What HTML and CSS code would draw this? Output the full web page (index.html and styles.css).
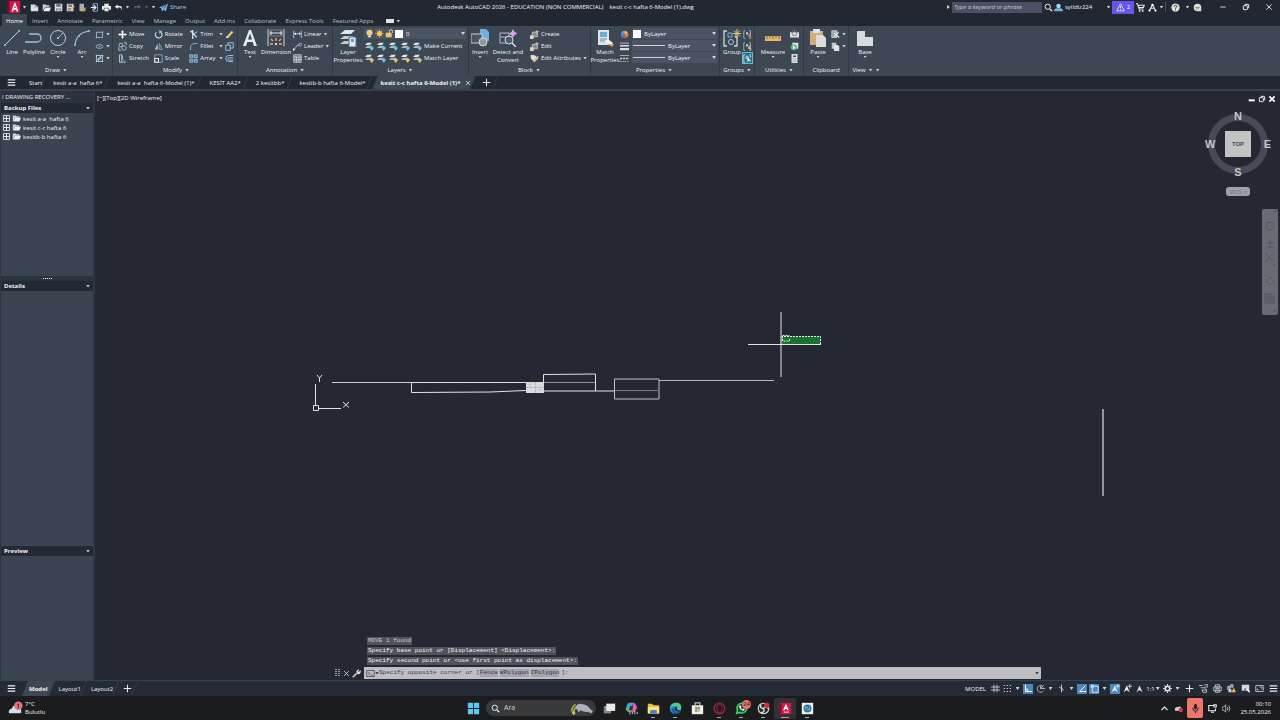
FILE: index.html
```html
<!DOCTYPE html>
<html lang="en">
<head>
<meta charset="utf-8">
<title>Autodesk AutoCAD 2026</title>
<link rel="stylesheet" href="styles.css">
</head>
<body>
<svg class="sprite" aria-hidden="true">
  <defs>
    <symbol id="new" viewBox="0 0 12 12"><path d="M1 2h6l4 3v6H1z" fill="#dcdde0"/><path d="M7 2v3h4" fill="none" stroke="#666"/></symbol>
    <symbol id="open" viewBox="0 0 12 12"><path d="M1 11V2h4l1 1h4v2H4L1 11z" fill="#d4d6da"/><path d="M4 6h8l-2 5H2z" fill="#eee"/></symbol>
    <symbol id="save" viewBox="0 0 12 12"><path d="M1 1h10v10H1z" fill="#dcdde0"/><path d="M3 1h6v4H3zM3 7h6v4H3z" fill="#6b7280"/><path d="M4 8h4M4 10h4" stroke="#eee"/></symbol>
    <symbol id="saveas" viewBox="0 0 12 12"><path d="M1 1h9v10H1z" fill="#d0d2d6"/><path d="M3 2h5v3H3zM3 7h4v3H3z" fill="#6b7280"/><path d="M5 10l6-6" stroke="#e8b85a" stroke-width="2"/></symbol>
    <symbol id="webopen" viewBox="0 0 12 12"><path d="M2 1h6v10H2z" fill="#9db4c6"/><path d="M5 6h5v5H5z" fill="#d9a04e"/></symbol>
    <symbol id="websave" viewBox="0 0 12 12"><path d="M4 1h6v10H4z" fill="none" stroke="#9fc8e8"/><path d="M1 6h6M5 3l3 3-3 3" stroke="#e5eef5" fill="none" stroke-width="1.5"/></symbol>
    <symbol id="plot" viewBox="0 0 12 12"><path d="M3 1h6v3H3zM0 4h12v5H0z" fill="#eceded"/><path d="M3 7h6v4H3z" fill="#fff" stroke="#555"/></symbol>
    <symbol id="undo" viewBox="0 0 12 12"><path d="M5 2L1 5l4 3V6h3q2 0 2 4 2-6-2-6H5z" fill="#eee"/></symbol>
    <symbol id="redo" viewBox="0 0 12 12"><path d="M7 2l4 3-4 3V6H4q-2 0-2 4-2-6 2-6h3z" fill="#596170"/></symbol>
    <symbol id="share" viewBox="0 0 12 12"><path d="M0 6l12-5-3 10-3-2-2 2-1-4z" fill="#80bfed"/><path d="M3 7l7-5-4 7" stroke="#284b68" fill="none"/></symbol>
    <symbol id="mag" viewBox="0 0 12 12"><circle cx="5" cy="5" r="3.5" fill="none" stroke="#eee" stroke-width="1.3"/><path d="M8 8l3 3" stroke="#eee" stroke-width="1.6"/></symbol>
    <symbol id="user" viewBox="0 0 12 12"><circle cx="6" cy="4" r="3" fill="#a7d8ee"/><path d="M0 11q0-4 4-4h4q4 0 4 4z" fill="#69b5dc"/></symbol>
    <symbol id="warn" viewBox="0 0 12 12"><path d="M6 1l5 9.500H1z" fill="none" stroke="#fff"/><path d="M6 4v3M6 8v1.300" stroke="#fff"/></symbol>
    <symbol id="cart" viewBox="0 0 12 12"><path d="M0 1h2l2 7h6M3 3h8l-1 3H4" fill="none" stroke="#eee" stroke-width="1.400"/><circle cx="5" cy="10.500" r="1.200" fill="#eee"/><circle cx="9" cy="10.500" r="1.200" fill="#eee"/></symbol>
    <symbol id="appstore" viewBox="0 0 12 12"><path d="M6 2l-4 8M6 2l4 8M4 7h4" stroke="#e6e6e8" stroke-width="1.500"/><circle cx="6" cy="2.500" r="1.500" fill="#fff"/><circle cx="2" cy="10" r="1.500" fill="#fff"/><circle cx="10" cy="10" r="1.500" fill="#fff"/></symbol>
    <symbol id="help" viewBox="0 0 12 12"><circle cx="6" cy="6" r="5.500" fill="#deded9"/><path d="M4 5q0-2 2-2t2 1.500q0 1-2 2v1M6 8.500V10" fill="none" stroke="#38404c" stroke-width="1.300"/></symbol>
    <symbol id="chat" viewBox="0 0 12 12"><path d="M6 1a5 5 0 1 0 0 10h5V6a5 5 0 0 0-5-5z" fill="#deded9"/><path d="M3 6h6M4 8h4" stroke="#777"/></symbol>
    <symbol id="min" viewBox="0 0 12 12"><path d="M2 6h8" stroke="#eee" stroke-width="1.300"/></symbol>
    <symbol id="minbold" viewBox="0 0 12 12"><path d="M1 8h9" stroke="#fff" stroke-width="3"/></symbol>
    <symbol id="restore" viewBox="0 0 12 12"><rect x="2" y="4" width="6" height="6" rx="1" fill="none" stroke="#eee" stroke-width="1.500"/><path d="M4 2h5q1 0 1 1v5" fill="none" stroke="#eee" stroke-width="1.500"/></symbol>
    <symbol id="close" viewBox="0 0 12 12"><path d="M2 2l8 8M10 2l-8 8" stroke="#e4e6ea" stroke-width="1.400"/></symbol>
    <symbol id="closebold" viewBox="0 0 12 12"><path d="M2 2l8 8M10 2l-8 8" stroke="#fff" stroke-width="2.500"/></symbol>
    <symbol id="menu" viewBox="0 0 12 12"><path d="M1 2.500h10M1 6h10M1 9.500h10" stroke="#f0f0f2" stroke-width="1.500"/></symbol>
    <symbol id="plus" viewBox="0 0 12 12"><path d="M6 1v10M1 6h10" stroke="#e8eaee" stroke-width="1.400"/></symbol>

    <symbol id="line" viewBox="0 0 18 18"><path d="M2 16L16 2" stroke="#c9cfd6"/><path d="M1 15h2v2H1zM15 1h2v2h-2z" fill="#72b7dc"/></symbol>
    <symbol id="polyline" viewBox="0 0 18 18"><path d="M1 13h11a4 4 0 0 0 0-8L5 5" fill="none" stroke="#aebdca" stroke-width="1.300"/><path d="M0 12h2v2H0zM11 12h2v2h-2zM4 4h2v2H4z" fill="#6caed5"/></symbol>
    <symbol id="circle" viewBox="0 0 18 18"><circle cx="9" cy="9" r="7.500" fill="none" stroke="#c3cad2"/><path d="M9 9l5-5" stroke="#83b9da"/><path d="M8 8h2v2H8z" fill="#83c0e3"/></symbol>
    <symbol id="arc" viewBox="0 0 18 18"><path d="M2 16Q3 4 16 2" fill="none" stroke="#b7c2cd" stroke-width="1.200"/><path d="M1 15h2v2H1zM5 6h2v2H5zM15 1h2v2h-2z" fill="#72b7dc"/></symbol>
    <symbol id="rect" viewBox="0 0 12 12"><path d="M2 3h8v7H2z" fill="none" stroke="#c6ced6"/><path d="M1 9h2v2H1zM9 2h2v2H9z" fill="#7fc1e8"/></symbol>
    <symbol id="ellipse" viewBox="0 0 12 12"><ellipse cx="6" cy="6" rx="4.500" ry="2.500" fill="none" stroke="#bdcad6"/><circle cx="6" cy="6" r="1" fill="#7fc1e8"/></symbol>
    <symbol id="hatch" viewBox="0 0 12 12"><path d="M1 2h10M1 10h10M2 1v10M10 1v10" fill="none" stroke="#d7dde3"/><path d="M3 8l5-5M4 9l5-5" stroke="#79b8e0" stroke-width="1.500"/></symbol>
    <symbol id="move" viewBox="0 0 12 12"><path d="M6 0l2 3H7v2h2V4l3 2-3 2V7H7v2h1l-2 3-2-3h1V7H3v1L0 6l3-2v1h2V3H4z" fill="#f0f2f4"/></symbol>
    <symbol id="copy" viewBox="0 0 12 12"><circle cx="4" cy="4" r="2.500" fill="none" stroke="#d5dde5"/><circle cx="8" cy="8" r="3" fill="none" stroke="#8ebee0" stroke-width="1.300"/><path d="M8 1h3v3M1 7v4h3" fill="none" stroke="#dbe1e7"/></symbol>
    <symbol id="stretch" viewBox="0 0 12 12"><path d="M2 1h3v10H2z" fill="none" stroke="#dee3e8"/><path d="M6 2v5l4 4H5" fill="none" stroke="#82bae0" stroke-width="1.300"/></symbol>
    <symbol id="rotate" viewBox="0 0 12 12"><path d="M8 2a4.500 4.500 0 1 1-5 1" fill="none" stroke="#e2e7ec" stroke-width="1.400"/><path d="M7 0l4 2-4 3z" fill="#8dc4ea"/></symbol>
    <symbol id="mirror" viewBox="0 0 12 12"><path d="M5 2v8H1z" fill="#b9c2cc"/><path d="M7 2v8h4z" fill="none" stroke="#7fbfe8"/></symbol>
    <symbol id="scale" viewBox="0 0 12 12"><path d="M1 1h10v10H1z" fill="none" stroke="#9eb3c6"/><path d="M1 6h5v5H1z" fill="none" stroke="#e5e9ee" stroke-width="1.400"/></symbol>
    <symbol id="trim" viewBox="0 0 12 12"><path d="M2 1l5 5 3 4M5 0v12" fill="none" stroke="#e8edf1" stroke-width="1.600"/><path d="M7 5l4-3" stroke="#7fc1e8" stroke-width="1.500"/></symbol>
    <symbol id="fillet" viewBox="0 0 12 12"><path d="M2 11V8q0-6 6-6h3" fill="none" stroke="#87aac5" stroke-width="1.300"/></symbol>
    <symbol id="array" viewBox="0 0 12 12"><path d="M1 1h4v4H1zM7 1h4v4H7zM1 7h4v4H1zM7 7h4v4H7z" fill="#4c7ca4" stroke="#a8cee9"/></symbol>
    <symbol id="erase" viewBox="0 0 12 12"><path d="M2 9l7-8 2 2-7 8z" fill="#f1cf78"/><path d="M1 11l1-3 2 2z" fill="#eee"/></symbol>
    <symbol id="explode" viewBox="0 0 12 12"><path d="M1 4h6v7H1zM4 4V1h7v7H7" fill="none" stroke="#9bcaec" stroke-width="1.200"/></symbol>
    <symbol id="offset" viewBox="0 0 12 12"><path d="M11 2H5a4 4 0 0 0 0 8h6M11 5H5.500a1 1 0 0 0 0 3H11" fill="none" stroke="#a3cdea" stroke-width="1.200"/></symbol>
    <symbol id="text" viewBox="0 0 18 18"><path d="M2 17L8 1h2l6 16h-3l-1.300-4H6.300L5 17zM7 10.500h4L9 4.500z" fill="#e9ecef"/></symbol>
    <symbol id="dim" viewBox="0 0 18 18"><path d="M1 0v17M17 0v17" stroke="#cfd5db"/><path d="M2 4h14M4 2v4M14 2v4" stroke="#e6eaed"/><path d="M2 1h14v6H2z" fill="none" stroke="#77818c"/><path d="M9 9v3M4 10l2 2M14 10l-2 2M3 15h3M12 15h3" stroke="#eaa465" stroke-width="1.500"/><path d="M8 14h2v2H8z" fill="#f1d3a5"/></symbol>
    <symbol id="linear" viewBox="0 0 12 12"><path d="M1 1v10M11 1v10M1 5h10" stroke="#d8dee3"/><path d="M2 5l2-2v4zM10 5L8 3v4z" fill="#eee"/></symbol>
    <symbol id="leader" viewBox="0 0 12 12"><path d="M1 11l5-7h3" fill="none" stroke="#d8dee3"/><circle cx="9.500" cy="3.500" r="2" fill="none" stroke="#9bc9ea"/><path d="M0 12V8l3 2z" fill="#eee"/></symbol>
    <symbol id="table" viewBox="0 0 12 12"><path d="M1 1h10v10H1zM1 4h10M1 7.500h10M4.500 4v7M8 4v7" fill="#66717d" stroke="#dce0e4"/></symbol>
    <symbol id="layerprops" viewBox="0 0 18 18"><path d="M1 5l5-4h10l-4 4z" fill="#e4e7e8"/><path d="M1 10l4-3h10l-4 3zM1 15l4-3h5v3z" fill="#c4cbd0"/><path d="M10 8h7v10h-7z" fill="#dce9f3" stroke="#536b80"/><path d="M12 10h3v3h-3z" fill="#579fd2"/></symbol>
    <symbol id="bulb" viewBox="0 0 12 12"><circle cx="6" cy="5" r="4" fill="#f1cf7b"/><path d="M4 9h4v2H4z" fill="#e4e5e6"/></symbol>
    <symbol id="sun" viewBox="0 0 12 12"><path d="M6 0v12M0 6h12M2 2l8 8M10 2l-8 8" stroke="#d9a651"/><circle cx="6" cy="6" r="3.500" fill="#f2c35d"/></symbol>
    <symbol id="lock" viewBox="0 0 12 12"><path d="M6 6V3q0-2 2-2t2 2v2" fill="none" stroke="#eed28b" stroke-width="1.300"/><path d="M1 5h8v6H1z" fill="#edc66e"/></symbol>
    <symbol id="layer" viewBox="0 0 12 12"><path d="M0 4l3-3h6L7 4z" fill="#e0e4e6"/><path d="M0 8l3-3h6L7 8z" fill="#aeb7be"/><path d="M9 5l3 3-3 4-3-4z" fill="currentColor"/></symbol>
    <symbol id="insert" viewBox="0 0 18 18"><path d="M9 0h6l3 3v9H9z" fill="#70afe0"/><path d="M0 5h11v9H0z" fill="#4b5561" stroke="#c7ccd0"/><circle cx="12" cy="13" r="4" fill="#8d98a2" stroke="#d3d8db"/></symbol>
    <symbol id="detect" viewBox="0 0 18 18"><path d="M1 4h9v10H1zM1 8h9" fill="none" stroke="#b5bdc4"/><circle cx="10" cy="11" r="4" fill="#505b68" stroke="#dae0e5"/><path d="M13 14l4 4" stroke="#dae0e5" stroke-width="1.500"/><path d="M14 0l1.500 3 3 1.500-3 1.500L14 9l-1.500-3-3-1.500 3-1.500z" fill="#d7a5ef"/></symbol>
    <symbol id="create" viewBox="0 0 12 12"><path d="M3 3h7v6H3z" fill="#7d8994" stroke="#ccd2d7"/><path d="M0 7h5v5H0z" fill="#ddd6bd"/><path d="M9 0v5M7 2h5" stroke="#f3c467"/></symbol>
    <symbol id="editattr" viewBox="0 0 12 12"><path d="M1 1l6 1 4 4-5 5-5-5z" fill="#dfe1df"/><path d="M5 10l6-7" stroke="#e1b35e" stroke-width="2"/></symbol>
    <symbol id="match" viewBox="0 0 18 18"><path d="M2 1h11v15H2z" fill="#dce4e9"/><path d="M4 3h7v5H4z" fill="#68add5"/><path d="M4 10h7M4 12h5" stroke="#789"/><path d="M9 12l3-2 5 4-2 3z" fill="#eee"/><path d="M12 15l4 3 2-3z" fill="#dda653"/></symbol>
    <symbol id="wheel" viewBox="0 0 12 12"><path d="M6 6V1a5 5 0 0 1 4.500 3z" fill="#efd257"/><path d="M6 6l4.500-2A5 5 0 0 1 9 10z" fill="#e98b45"/><path d="M6 6l3 4a5 5 0 0 1-5 .500z" fill="#d84a78"/><path d="M6 6l-2 4.500A5 5 0 0 1 1 6z" fill="#8e63d9"/><path d="M6 6H1a5 5 0 0 1 2-4z" fill="#4ba0e3"/><path d="M6 6L3 2a5 5 0 0 1 3-1z" fill="#5bc77d"/></symbol>
    <symbol id="weights" viewBox="0 0 12 12"><path d="M0 1.500h12" stroke="#ddd"/><path d="M0 5h12" stroke="#ddd" stroke-width="2"/><path d="M0 9.500h12" stroke="#ddd" stroke-width="3"/></symbol>
    <symbol id="types" viewBox="0 0 12 12"><path d="M0 2h12" stroke="#ccc"/><path d="M0 6h12" stroke="#ccc" stroke-width="2" stroke-dasharray="3 1"/><path d="M0 10h12" stroke="#ccc" stroke-dasharray="2 1"/></symbol>
    <symbol id="group" viewBox="0 0 18 18"><path d="M4 2H1v15h3M12 8h2v9h-3" fill="none" stroke="#c8d8e5" stroke-width="1.300"/><path d="M5 4h4v4H5z" fill="none" stroke="#74b5e2"/><circle cx="8" cy="13" r="2.500" fill="none" stroke="#a5cde9"/><path d="M14 0v9M10 4.500h8M11 1.500l6 6M17 1.500l-6 6" stroke="#f0c66e"/></symbol>
    <symbol id="ungroup" viewBox="0 0 12 12"><path d="M3 1H1v10h2M8 1h2v10H8" fill="none" stroke="#9cc7e5"/><path d="M4 3h3v3H4z" fill="#b9cbd9"/><path d="M7 7l4 3M10 4l-3 5" stroke="currentColor" stroke-width="1.500"/></symbol>
    <symbol id="groupsel" viewBox="0 0 12 12"><path d="M3 1H1v10h2M8 1h2v4M4 3h3v3H4z" fill="none" stroke="#d7e9ef"/><path d="M6 4v7l2-2 3 1z" fill="#fff"/></symbol>
    <symbol id="measure" viewBox="0 0 18 18"><path d="M1 7h16v5H1z" fill="#e9b66a"/><path d="M3 7v3M6 7v2M9 7v3M12 7v2M15 7v3" stroke="#705d43"/></symbol>
    <symbol id="quick" viewBox="0 0 12 12"><path d="M0 3h12v7H0z" fill="#dce0e1"/><path d="M3 0v6M9 0v6M3 7h6" stroke="#5c6670"/><path d="M6 0v4" stroke="#e86767"/></symbol>
    <symbol id="selall" viewBox="0 0 12 12"><path d="M3 1h8v8H3z" fill="#d7e9da"/><circle cx="5" cy="7" r="4" fill="#58b979"/><path d="M4 4v6l2-2 2 1z" fill="#fff"/></symbol>
    <symbol id="calc" viewBox="0 0 12 12"><path d="M2 0h8v12H2z" fill="#d8dcdf"/><path d="M4 2h4v2H4zM4 6h1v1H4zM7 6h1v1H7zM4 9h1v1H4zM7 9h1v1H7z" fill="#4a5561"/></symbol>
    <symbol id="paste" viewBox="0 0 18 18"><path d="M1 2h13v14H1z" fill="#d2ad79"/><path d="M4 0h7v4H4z" fill="#dfe2e3"/><path d="M7 6h7l3 3v9H7z" fill="#ddd"/></symbol>
    <symbol id="cut" viewBox="0 0 12 12"><path d="M1 1h7v9H1z" fill="#99a2ab" stroke="#d9dee1"/><path d="M4 4l7 6M10 3l-6 6" stroke="#e7eaed" stroke-width="1.500"/></symbol>
    <symbol id="copyclip" viewBox="0 0 12 12"><path d="M1 1h6v8H1z" fill="#c3c8cc"/><path d="M4 4h5l2 2v6H4z" fill="#e2e3e3"/></symbol>
    <symbol id="base" viewBox="0 0 18 18"><path d="M1 2h8v6h8v9H1z" fill="#d9dade"/></symbol>

    <symbol id="folder" viewBox="0 0 12 12"><path d="M1 10V2h4l1 1h4v2H4L2 10z" fill="#ccd4da"/><path d="M4 5h8l-2 5H2z" fill="#edf0f1"/></symbol>
    <symbol id="expand" viewBox="0 0 7 7"><path d="M.500.500h6v6h-6z" fill="#3b4551" stroke="#cdd3d9"/><path d="M1 3.500h5M3.500 1v5" stroke="#e8ebee"/></symbol>
    <symbol id="wrench" viewBox="0 0 12 12"><path d="M1 11l5-5" stroke="#ddd" stroke-width="2"/><path d="M11 2L9 4 8 3l2-2q-3-1-4 2t2 4 4-5z" fill="#ddd"/></symbol>
    <symbol id="prompt" viewBox="0 0 12 12"><path d="M1 2h10v8H1z" fill="none" stroke="#363942"/><path d="M3 4l2 2-2 2M6 8h3" fill="none" stroke="#363942"/></symbol>

    <symbol id="grid" viewBox="0 0 12 12"><path d="M0 4h12M0 8h12M4 1v10M8 1v10" stroke="#e2e4e7"/></symbol>
    <symbol id="snap" viewBox="0 0 12 12"><path d="M1 2h11M1 6h11M1 10h11" stroke="#dee1e4" stroke-width="1.500" stroke-dasharray="1.500 2.500"/></symbol>
    <symbol id="ortho" viewBox="0 0 12 12"><path d="M2 1v9h9M2 7h3v3" fill="none" stroke="#fff" stroke-width="1.300"/></symbol>
    <symbol id="polar" viewBox="0 0 12 12"><path d="M10 9a4.500 4.500 0 1 1 0-5M6 6h6M6 6l4-4M6 3v3" fill="none" stroke="#d7dadd"/></symbol>
    <symbol id="iso" viewBox="0 0 12 12"><path d="M6 1v10M3 4l6 4" stroke="#ddd" stroke-width="1.200"/></symbol>
    <symbol id="track" viewBox="0 0 12 12"><path d="M2 10l8-8M2 10h9" stroke="#eff6fc" fill="none" stroke-width="1.300"/></symbol>
    <symbol id="osnap" viewBox="0 0 12 12"><path d="M3 3h8v8H3z" fill="none" stroke="#fff"/><path d="M1 1h4v4H1z" fill="#b9daf5"/></symbol>
    <symbol id="anno" viewBox="0 0 12 12"><path d="M1 11l4-9 4 9-4-3z" fill="#f1f4f7"/><path d="M9 0v6M6 3h6" stroke="#f1f4f7"/></symbol>
    <symbol id="annoscale" viewBox="0 0 12 12"><path d="M2 11l4-9 4 9-4-3z" fill="#dedfe2"/></symbol>
    <symbol id="gear" viewBox="0 0 12 12"><circle cx="6" cy="6" r="3" fill="none" stroke="#eee" stroke-width="2"/><path d="M6 0v2M6 10v2M0 6h2M10 6h2M2 2l1.500 1.500M8.500 8.500L10 10M10 2L8.500 3.500M3.500 8.500L2 10" stroke="#eee" stroke-width="1.400"/></symbol>
    <symbol id="monitor" viewBox="0 0 12 12"><path d="M0 2h5M2 5h5M7 1h5v3H7M4 8h6v3H5z" fill="none" stroke="#dcdfe2"/><path d="M7 5l3 3" stroke="#dcdfe2"/></symbol>
    <symbol id="isolate" viewBox="0 0 12 12"><path d="M3 1h6v3H3zM3 8h6v3H3z" fill="none" stroke="#ddd"/><path d="M1 4h10v5H1z" fill="none" stroke="#ddd"/><path d="M3 6h6" stroke="#ddd"/></symbol>
    <symbol id="perf" viewBox="0 0 12 12"><path d="M1 8V3h3v5M5 5V1h3v4" stroke="#dbe1e6" fill="#77828c"/><path d="M2 7h4v4H2z" fill="#d4d8da"/><path d="M9 5l3 6H6z" fill="#f0bd49"/></symbol>
    <symbol id="custom" viewBox="0 0 12 12"><path d="M1 1h10v8H1z" fill="#d8dadd"/><path d="M4 6h3v3H4z" fill="#6b727d"/><path d="M8 7l4 4" stroke="#fff" stroke-width="2"/></symbol>
    <symbol id="clean" viewBox="0 0 12 12"><path d="M1 2h10v8H1z" fill="none" stroke="#ddd"/><path d="M6 4h3v3M3 6v2h2" fill="none" stroke="#ddd"/></symbol>

    <symbol id="weather" viewBox="0 0 16 16"><path d="M1 13q-1-4 3-5 2-5 6-2 4 0 4 4 1 2-1 3z" fill="#d4dced"/><circle cx="11" cy="5" r="4.500" fill="#ed7184"/><path d="M10 4l1-1v5" fill="none" stroke="#421923"/></symbol>
    <symbol id="windows" viewBox="0 0 16 16"><path d="M1 1h6.500v6.500H1zM8.500 1H15v6.500H8.500zM1 8.500h6.500V15H1zM8.500 8.500H15V15H8.500z" fill="#5bc7f3"/></symbol>
    <symbol id="manatee" viewBox="0 0 28 16"><path d="M2 12Q2 5 7 3M5 13Q4 7 9 6" fill="none" stroke="#9fb04c" stroke-width="2"/><path d="M7 6q2-6 10-3 5 1 8 6l3 2-2 3-4-2q-5 1-9-2l-3 3-1-4q-3 0-2-3z" fill="#a9afbb"/><path d="M2 13l2-2 3 3-3 2z" fill="#e0c553"/></symbol>
    <symbol id="taskview" viewBox="0 0 16 16"><path d="M1 5h9v9H1z" fill="#84868a"/><path d="M4 2h11v9H4z" fill="#eaeaea"/></symbol>
    <symbol id="copilot" viewBox="0 0 16 16"><path d="M5 1h5l-3 9H1q1-8 4-9z" fill="#3aa8df"/><path d="M10 1q3 0 5 6l-3 5H6l3-7z" fill="#dc63b1"/><path d="M1 7h6l-1 5q-4 1-5-5z" fill="#69b953"/><path d="M6 5h4l-1 5H5z" fill="#28343d"/><path d="M6 15v-4M9 15v-3M12 15v-4M15 15v-3" stroke="#eee"/></symbol>
    <symbol id="explorer" viewBox="0 0 16 16"><path d="M1 2h5l2 2h7v10H1z" fill="#f2bb38"/><path d="M1 6h14v8H1z" fill="#ffe083"/><path d="M4 10h8v4H4z" fill="#2f86cf"/></symbol>
    <symbol id="edge" viewBox="0 0 16 16"><circle cx="8" cy="8" r="7" fill="#1b8ed1"/><path d="M1 8Q2 1 9 1t6 7q-1 3-5 2 2-5-2-5-5 0-7 3z" fill="#53c98a"/><path d="M6 8q0 5 7 5-5 4-8 0-3-4 2-7z" fill="#17549b"/><path d="M7 7q3-2 3 2 1 2 4 1l-1 2q-6 0-6-5z" fill="#1f292c"/></symbol>
    <symbol id="store" viewBox="0 0 16 16"><path d="M5 4V1h6v3" fill="none" stroke="#9fc6d9" stroke-width="1.500"/><path d="M1 4h14v11H1z" fill="#f0efeb"/><path d="M5 6h3v3H5z" fill="#e67753"/><path d="M8 6h3v3H8z" fill="#69a65a"/><path d="M5 9h3v3H5z" fill="#4f9dce"/><path d="M8 9h3v3H8z" fill="#e6b949"/></symbol>
    <symbol id="opera" viewBox="0 0 16 16"><circle cx="8" cy="8" r="6.500" fill="none" stroke="#a72343" stroke-width="1.600"/><ellipse cx="8" cy="8" rx="3" ry="5.500" fill="none" stroke="#7e2139" stroke-width="1.500"/></symbol>
    <symbol id="whatsapp" viewBox="0 0 16 16"><path d="M2 14l1-4a6 6 0 1 1 3 3z" fill="#1c462f" stroke="#38cf69" stroke-width="2"/><path d="M5 5q0 5 6 6l1-2-2-1-1 1-2-2 1-1-1-2z" fill="#eee"/></symbol>
    <symbol id="obs" viewBox="0 0 16 16"><circle cx="8" cy="8" r="6.500" fill="#26282b" stroke="#d6d7d8" stroke-width="1.400"/><path d="M8 8Q3 8 5 3M8 8q3-4 5 0M8 8q2 5-3 5" fill="none" stroke="#ddd" stroke-width="1.800"/><circle cx="12" cy="4" r="3.300" fill="#df283d"/></symbol>
    <symbol id="acad" viewBox="0 0 16 16"><path d="M1 1h14v14H1z" fill="#cf1848"/><path d="M2 2v12" stroke="#7e0d2d" stroke-width="2"/><path d="M5 10l3-7h1l3 7h-2l-.500-1.500h-2L7 10zM8 7h1l-.500-2z" fill="#fff"/><path d="M6 12.500h6" stroke="#f2b9c8" stroke-width="1.500"/></symbol>
    <symbol id="logo" viewBox="0 0 16 16"><path d="M1 1h14v14H1z" fill="#d4134a"/><path d="M2 1v14" stroke="#7e0d2d" stroke-width="2"/><path d="M5 13l3.500-10h1L13 13h-2l-.700-2H7.700L7 13zM8 9h2L9 6z" fill="#fff"/></symbol>
    <symbol id="settings" viewBox="0 0 16 16"><path d="M1 1h14v14H1z" fill="#edf2f5"/><circle cx="8" cy="8" r="4" fill="#71add2" stroke="#347daa" stroke-width="2"/><path d="M6 5h3v3H7v3h3" fill="none" stroke="#285a7f"/></symbol>
    <symbol id="up" viewBox="0 0 12 12"><path d="M2 8l4-4 4 4" fill="none" stroke="#eee" stroke-width="1.500"/></symbol>
    <symbol id="cloud" viewBox="0 0 12 12"><path d="M1 8q0-4 4-4 4-2 5 2v3H2z" fill="#cfd4dc"/><circle cx="9" cy="8" r="3" fill="#d7394e"/></symbol>
    <symbol id="mic" viewBox="0 0 12 12"><rect x="4.500" y="1" width="3" height="6" rx="1.500" fill="#26191b"/><path d="M3 5q0 4 3 4t3-4M6 9v2" fill="none" stroke="#26191b"/></symbol>
    <symbol id="net" viewBox="0 0 12 12"><path d="M8 2H1v7h9V6M4 11h4M8 1h3v3H8z" fill="none" stroke="#eee" stroke-width="1.400"/></symbol>
    <symbol id="vol" viewBox="0 0 12 12"><path d="M0 4h2l3-3v10L2 8H0z" fill="none" stroke="#ddd"/><path d="M7 4q2 2 0 4M9 2q3 4 0 8" fill="none" stroke="#ddd"/></symbol>
  </defs>
</svg>

<header class="titlebar">
  <div class="quick">
    <button class="applogo" aria-label="Application menu"><svg><use href="#logo"/></svg></button>
    <button class="caret" aria-label="More"></button>
    <button class="q" aria-label="New"><svg><use href="#new"/></svg></button>
    <button class="q" aria-label="Open"><svg><use href="#open"/></svg></button>
    <button class="q" aria-label="Save"><svg><use href="#save"/></svg></button>
    <button class="q" aria-label="Save as"><svg><use href="#saveas"/></svg></button>
    <button class="q" aria-label="Open from web"><svg><use href="#webopen"/></svg></button>
    <button class="q" aria-label="Save to web"><svg><use href="#websave"/></svg></button>
    <button class="q" aria-label="Plot"><svg><use href="#plot"/></svg></button>
    <button class="q" aria-label="Undo"><svg><use href="#undo"/></svg></button>
    <button class="caret" aria-label="Undo list"></button>
    <button class="q" aria-label="Redo"><svg><use href="#redo"/></svg></button>
    <button class="caret dim" aria-label="Redo list"></button>
    <button class="caret" aria-label="Customize"></button>
    <button class="sharebtn"><svg><use href="#share"/></svg>Share</button>
  </div>
  <h1 class="title"><span>Autodesk AutoCAD 2026 - EDUCATION (NON COMMERCIAL)</span><span>kesit c-c hafta 6-Model (1).dwg</span></h1>
  <div class="account">
    <button class="caret side" aria-label="Collapse search"></button>
    <input class="search" type="text" placeholder="Type a keyword or phrase" aria-label="Search help">
    <button class="q" aria-label="Search"><svg><use href="#mag"/></svg></button>
    <button class="usr"><svg><use href="#user"/></svg>syildiz224</button>
    <button class="caret" aria-label="Account menu"></button>
    <button class="alert"><svg><use href="#warn"/></svg>2</button>
    <button class="q" aria-label="Cart"><svg><use href="#cart"/></svg></button>
    <button class="q" aria-label="App store"><svg><use href="#appstore"/></svg></button>
    <button class="caret" aria-label="App menu"></button>
    <span class="rule"></span>
    <button class="q wide" aria-label="Help"><svg><use href="#help"/></svg></button>
    <button class="caret" aria-label="Help menu"></button>
    <button class="q" aria-label="Feedback"><svg><use href="#chat"/></svg></button>
    <button class="win first" aria-label="Minimize"><svg><use href="#min"/></svg></button>
    <button class="win" aria-label="Restore"><svg><use href="#restore"/></svg></button>
    <button class="win" aria-label="Close"><svg><use href="#close"/></svg></button>
  </div>
</header>

<nav class="menu">
  <button class="on">Home</button><button>Insert</button><button>Annotate</button><button>Parametric</button><button>View</button><button>Manage</button><button>Output</button><button>Add-ins</button><button>Collaborate</button><button>Express Tools</button><button>Featured Apps</button>
  <button class="ribbonmode" aria-label="Ribbon display"><span class="pill"></span><span class="tri"></span></button>
</nav>

<section class="ribbon">
  <div class="panel draw">
    <div class="tools">
      <button class="big w20"><svg><use href="#line"/></svg>Line</button>
      <button class="big w24"><svg><use href="#polyline"/></svg>Polyline</button>
      <button class="big w24"><svg><use href="#circle"/></svg>Circle<i class="tri"></i></button>
      <button class="big w24"><svg><use href="#arc"/></svg>Arc<i class="tri"></i></button>
      <div class="col">
        <button class="sm" aria-label="Rectangle"><svg><use href="#rect"/></svg><i class="tri"></i></button>
        <button class="sm" aria-label="Ellipse"><svg><use href="#ellipse"/></svg><i class="tri"></i></button>
        <button class="sm" aria-label="Hatch"><svg><use href="#hatch"/></svg><i class="tri"></i></button>
      </div>
    </div>
    <button class="ptitle">Draw<i class="tri"></i></button>
  </div>
  <div class="panel modify">
    <div class="tools">
      <div class="col w36">
        <button class="sm"><svg><use href="#move"/></svg>Move</button>
        <button class="sm"><svg><use href="#copy"/></svg>Copy</button>
        <button class="sm"><svg><use href="#stretch"/></svg>Stretch</button>
      </div>
      <div class="col w36">
        <button class="sm"><svg><use href="#rotate"/></svg>Rotate</button>
        <button class="sm"><svg><use href="#mirror"/></svg>Mirror</button>
        <button class="sm"><svg><use href="#scale"/></svg>Scale</button>
      </div>
      <div class="col w36">
        <button class="sm"><svg><use href="#trim"/></svg>Trim<i class="tri end"></i></button>
        <button class="sm"><svg><use href="#fillet"/></svg>Fillet<i class="tri end"></i></button>
        <button class="sm"><svg><use href="#array"/></svg>Array<i class="tri end"></i></button>
      </div>
      <div class="col">
        <button class="sm" aria-label="Erase"><svg><use href="#erase"/></svg></button>
        <button class="sm" aria-label="Explode"><svg><use href="#explode"/></svg></button>
        <button class="sm" aria-label="Offset"><svg><use href="#offset"/></svg></button>
      </div>
    </div>
    <button class="ptitle">Modify<i class="tri"></i></button>
  </div>
  <div class="panel annotation">
    <div class="tools">
      <button class="big w20"><svg><use href="#text"/></svg>Text<i class="tri"></i></button>
      <button class="big w32"><svg><use href="#dim"/></svg>Dimension</button>
      <div class="col w36">
        <button class="sm"><svg><use href="#linear"/></svg>Linear<i class="tri end"></i></button>
        <button class="sm"><svg><use href="#leader"/></svg>Leader<i class="tri end"></i></button>
        <button class="sm"><svg><use href="#table"/></svg>Table</button>
      </div>
    </div>
    <button class="ptitle">Annotation<i class="tri"></i></button>
  </div>
  <div class="panel layers">
    <div class="tools">
      <button class="big w28"><svg><use href="#layerprops"/></svg>Layer Properties</button>
      <div class="col grow">
        <div class="drop"><svg><use href="#bulb"/></svg><svg><use href="#sun"/></svg><svg><use href="#lock"/></svg><span class="swatch"></span><select aria-label="Current layer"><option>0</option></select><i class="tri"></i></div>
        <div class="row">
          <button class="sm teal" aria-label="Layer off"><svg><use href="#layer"/></svg></button>
          <button class="sm blue" aria-label="Isolate layer"><svg><use href="#layer"/></svg></button>
          <button class="sm teal" aria-label="Freeze layer"><svg><use href="#layer"/></svg></button>
          <button class="sm blue" aria-label="Lock layer"><svg><use href="#layer"/></svg></button>
          <button class="sm named"><svg class="blue"><use href="#layer"/></svg>Make Current</button>
        </div>
        <div class="row">
          <button class="sm gold" aria-label="Layers on"><svg><use href="#layer"/></svg></button>
          <button class="sm blue" aria-label="Unisolate layer"><svg><use href="#layer"/></svg></button>
          <button class="sm gold" aria-label="Thaw layers"><svg><use href="#layer"/></svg></button>
          <button class="sm gold" aria-label="Unlock layer"><svg><use href="#layer"/></svg></button>
          <button class="sm named"><svg class="gold"><use href="#layer"/></svg>Match Layer</button>
        </div>
      </div>
    </div>
    <button class="ptitle">Layers<i class="tri"></i></button>
  </div>
  <div class="panel block">
    <div class="tools">
      <button class="big w20"><svg><use href="#insert"/></svg>Insert<i class="tri"></i></button>
      <button class="big w36"><svg><use href="#detect"/></svg>Detect and Convert</button>
      <div class="col">
        <button class="sm"><svg><use href="#create"/></svg>Create</button>
        <button class="sm"><svg><use href="#create"/></svg>Edit</button>
        <button class="sm"><svg><use href="#editattr"/></svg>Edit Attributes<i class="tri"></i></button>
      </div>
    </div>
    <button class="ptitle">Block<i class="tri"></i></button>
  </div>
  <div class="panel properties">
    <div class="tools">
      <button class="big w28"><svg><use href="#match"/></svg>Match Properties</button>
      <div class="col">
        <button class="sm" aria-label="Color"><svg><use href="#wheel"/></svg></button>
        <button class="sm" aria-label="Lineweight"><svg><use href="#weights"/></svg></button>
        <button class="sm" aria-label="Linetype"><svg><use href="#types"/></svg></button>
      </div>
      <div class="col grow">
        <div class="drop"><span class="swatch"></span><select aria-label="Object color"><option>ByLayer</option></select><i class="tri"></i></div>
        <div class="drop"><span class="stroke"></span><select aria-label="Object lineweight"><option>ByLayer</option></select><i class="tri"></i></div>
        <div class="drop"><span class="stroke"></span><select aria-label="Object linetype"><option>ByLayer</option></select><i class="tri"></i></div>
      </div>
    </div>
    <button class="ptitle">Properties<i class="tri"></i></button>
  </div>
  <div class="panel groups">
    <div class="tools">
      <button class="big w20"><svg><use href="#group"/></svg>Group</button>
      <div class="col">
        <button class="sm red" aria-label="Ungroup"><svg><use href="#ungroup"/></svg></button>
        <button class="sm gold" aria-label="Group edit"><svg><use href="#ungroup"/></svg></button>
        <button class="sm active" aria-label="Group selection"><svg><use href="#groupsel"/></svg></button>
      </div>
    </div>
    <button class="ptitle">Groups<i class="tri"></i></button>
  </div>
  <div class="panel utilities">
    <div class="tools">
      <button class="big w32"><svg><use href="#measure"/></svg>Measure<i class="tri"></i></button>
      <div class="col">
        <button class="sm" aria-label="Quick select"><svg><use href="#quick"/></svg></button>
        <button class="sm" aria-label="Select all"><svg><use href="#selall"/></svg></button>
        <button class="sm" aria-label="Calculator"><svg><use href="#calc"/></svg></button>
      </div>
    </div>
    <button class="ptitle">Utilities<i class="tri"></i></button>
  </div>
  <div class="panel clipboard">
    <div class="tools">
      <button class="big w24"><svg><use href="#paste"/></svg>Paste<i class="tri"></i></button>
      <div class="col">
        <button class="sm" aria-label="Cut"><svg><use href="#cut"/></svg><i class="tri"></i></button>
        <button class="sm" aria-label="Copy clip"><svg><use href="#copyclip"/></svg><i class="tri"></i></button>
      </div>
    </div>
    <button class="ptitle">Clipboard</button>
  </div>
  <div class="panel view">
    <div class="tools">
      <button class="big w28"><svg><use href="#base"/></svg>Base<i class="tri"></i></button>
    </div>
    <button class="ptitle">View<i class="tri"></i><i class="tri"></i></button>
  </div>
</section>

<nav class="doctabs">
  <button class="burger" aria-label="File tabs menu"><svg><use href="#menu"/></svg></button>
  <button class="tab start">Start</button>
  <button class="tab">kesit a-a&nbsp; hafta 6*</button>
  <button class="tab">kesit a-a&nbsp; hafta 6-Model (1)*</button>
  <button class="tab">KESİT AA2*</button>
  <button class="tab">2 kesitbb*</button>
  <button class="tab">kesitb-b hafta 6-Model*</button>
  <button class="tab current">kesit c-c hafta 6-Model (1)*<svg><use href="#close"/></svg></button>
  <button class="tab add" aria-label="New tab"><svg><use href="#plus"/></svg></button>
</nav>

<main class="work">
  <aside class="recovery">
    <h2 class="ptop">⁞ DRAWING RECOVERY ...</h2>
    <section class="pane backup">
      <button class="phead">Backup Files<i class="tri"></i></button>
      <ul class="tree">
        <li><svg class="expand"><use href="#expand"/></svg><svg><use href="#folder"/></svg>kesit a-a&nbsp; hafta 6</li>
        <li><svg class="expand"><use href="#expand"/></svg><svg><use href="#folder"/></svg>kesit c-c hafta 6</li>
        <li><svg class="expand"><use href="#expand"/></svg><svg><use href="#folder"/></svg>kesitb-b hafta 6</li>
      </ul>
    </section>
    <div class="grip"></div>
    <section class="pane details"><button class="phead">Details<i class="tri"></i></button></section>
    <section class="pane preview"><button class="phead">Preview<i class="tri"></i></button></section>
  </aside>

  <section class="canvas">
    <svg class="drawing" viewBox="95 91 1185 589" preserveAspectRatio="xMinYMin meet" role="img" aria-label="Model space">
      <g fill="none" stroke="#e2e3e7">
        <path d="M315.500 384v21M319 408.500h22M313.500 405.500h5v5h-5z"/>
        <path d="M317 375l2.500 3v4M322 375l-2.500 3M343 402l6 5.500M349 402l-6 5.500"/>
        <path d="M332 382.500h211" stroke="#c8cad0"/>
        <path d="M411.500 382.500H526M411.500 382v10.500L490 392l36-1.500h17"/>
        <path d="M543.500 391V374.500L595.500 374v17H543.500M595.500 391h19.500"/>
        <path d="M543 382.500h52" stroke="#8b8e98"/>
        <path d="M614.500 379h44.500v20h-44.500z" stroke="#c0c2c9"/>
        <path d="M615 390.500h44" stroke="#777a86"/>
        <path d="M659 380.500h115" stroke="#b6b8c0"/>
        <path d="M1103 409v87" stroke="#b8bac2" stroke-width="1.500"/>
      </g>
      <path d="M526 382h18v11h-18z" fill="#d9dad9"/>
      <path d="M526 387.500h18M535.500 382v11M530 384v2M540 389v2" stroke="#b2b4b8" stroke-dasharray="3 1"/>
      <path d="M781 336.500h39.500v8H781z" fill="#187333" stroke="#e8f2e9" stroke-dasharray="2 1"/>
      <path d="M782.500 335.500h7M782.500 336v5h7v-3" fill="none" stroke="#e6eee8" stroke-dasharray="2 1"/>
      <path d="M781 312v65" stroke="#a2a4ae" stroke-width="1.500"/>
      <path d="M748 344.500h73" stroke="#e2e6e5"/>
    </svg>
    <button class="viewlabel">[−][Top][2D Wireframe]</button>
    <div class="winbtns">
      <button aria-label="Minimize drawing"><svg><use href="#minbold"/></svg></button>
      <button aria-label="Restore drawing"><svg><use href="#restore"/></svg></button>
      <button aria-label="Close drawing"><svg><use href="#closebold"/></svg></button>
    </div>
    <div class="cube">
      <span class="n">N</span><span class="w">W</span><span class="ring"><button class="face">TOP</button></span><span class="e">E</span><span class="s">S</span>
    </div>
    <button class="wcs">WCS ▿</button>
    <div class="navbar" aria-hidden="true">
      <svg viewBox="0 0 16 106"><g fill="none" stroke="#555761"><circle cx="8" cy="17" r="4"/><path d="M8 31v8M5 34h7M5 38h7M3 44l9 9M12 44l-9 9M11 56h3M4 72l4-4 4 4-4 4zM3 85h9v9H3zM3 88h9M3 91h9M6 85v9M9 85v9M11 2h3v2M11 102h3v-2"/></g></svg>
    </div>
    <div class="command">
      <p class="old">MOVE 1 found</p>
      <p>Specify base point or [Displacement] &lt;Displacement&gt;:</p>
      <p>Specify second point or &lt;use first point as displacement&gt;:</p>
      <div class="cmdrow">
        <span class="handle"></span>
        <button aria-label="Close command line"><svg><use href="#close"/></svg></button>
        <button aria-label="Customize command line"><svg><use href="#wrench"/></svg></button>
        <div class="entry">
          <button class="recent" aria-label="Recent commands"><svg><use href="#prompt"/></svg><i class="tri"></i></button>
          <label for="cmd">Specify opposite corner or [</label>
          <button class="opt">Fence</button><button class="opt">WPolygon</button><button class="opt">CPolygon</button><span>]:</span>
          <input id="cmd" type="text">
          <i class="tri"></i>
        </div>
      </div>
    </div>
  </section>
</main>

<footer class="status">
  <button class="burger" aria-label="Layout menu"><svg><use href="#menu"/></svg></button>
  <button class="tab current">Model</button>
  <button class="tab">Layout1</button>
  <button class="tab">Layout2</button>
  <button class="tab add" aria-label="New layout"><svg><use href="#plus"/></svg></button>
  <div class="toggles">
    <button class="model">MODEL</button>
    <button class="t" aria-label="Grid"><svg><use href="#grid"/></svg></button>
    <button class="t" aria-label="Snap"><svg><use href="#snap"/></svg></button>
    <button class="caret" aria-label="Snap menu"></button>
    <button class="t on" aria-label="Ortho"><svg><use href="#ortho"/></svg></button>
    <button class="t" aria-label="Polar"><svg><use href="#polar"/></svg></button>
    <button class="caret" aria-label="Polar menu"></button>
    <button class="t" aria-label="Isodraft"><svg><use href="#iso"/></svg></button>
    <button class="caret" aria-label="Isodraft menu"></button>
    <button class="t on" aria-label="Tracking"><svg><use href="#track"/></svg></button>
    <button class="t on" aria-label="Object snap"><svg><use href="#osnap"/></svg></button>
    <button class="caret" aria-label="Snap modes"></button>
    <button class="t on" aria-label="Annotation visibility"><svg><use href="#anno"/></svg></button>
    <button class="t" aria-label="Auto scale"><svg><use href="#anno"/></svg></button>
    <button class="t" aria-label="Annotation scale"><svg><use href="#annoscale"/></svg></button>
    <button class="ratio">1:1<i class="tri"></i></button>
    <button class="t" aria-label="Workspace"><svg><use href="#gear"/></svg></button>
    <button class="caret" aria-label="Workspace menu"></button>
    <button class="t x" aria-label="Annotation monitor"><svg><use href="#plus"/></svg></button>
    <button class="t x" aria-label="Units"><svg><use href="#monitor"/></svg></button>
    <button class="t x" aria-label="Isolate"><svg><use href="#isolate"/></svg></button>
    <button class="t x" aria-label="Performance"><svg><use href="#perf"/></svg></button>
    <button class="t x" aria-label="Hardware"><svg><use href="#custom"/></svg></button>
    <button class="t x" aria-label="Clean screen"><svg><use href="#clean"/></svg></button>
    <button class="t x" aria-label="Customization"><svg><use href="#menu"/></svg></button>
  </div>
</footer>

<footer class="taskbar">
  <button class="weather"><svg><use href="#weather"/></svg><span>7°C<br>Bulutlu</span></button>
  <div class="apps">
    <button class="app" aria-label="Start"><svg><use href="#windows"/></svg></button>
    <label class="find"><svg><use href="#mag"/></svg><input type="text" placeholder="Ara" aria-label="Ara"><svg class="art"><use href="#manatee"/></svg></label>
    <button class="app" aria-label="Task view"><svg><use href="#taskview"/></svg></button>
    <button class="app" aria-label="Copilot"><svg><use href="#copilot"/></svg></button>
    <button class="app run" aria-label="File explorer"><svg><use href="#explorer"/></svg></button>
    <button class="app run" aria-label="Edge"><svg><use href="#edge"/></svg></button>
    <button class="app" aria-label="Store"><svg><use href="#store"/></svg></button>
    <button class="app run" aria-label="Opera"><svg><use href="#opera"/></svg></button>
    <button class="app run" aria-label="WhatsApp"><svg><use href="#whatsapp"/></svg><span class="badge">24</span></button>
    <button class="app run" aria-label="OBS"><svg><use href="#obs"/></svg></button>
    <button class="app run front" aria-label="AutoCAD"><svg><use href="#acad"/></svg></button>
    <button class="app run" aria-label="Settings"><svg><use href="#settings"/></svg></button>
  </div>
  <div class="tray">
    <button aria-label="Hidden icons"><svg><use href="#up"/></svg></button>
    <button aria-label="OneDrive"><svg><use href="#cloud"/></svg></button>
    <button class="mic" aria-label="Microphone"><svg><use href="#mic"/></svg></button>
    <button aria-label="Network"><svg><use href="#net"/></svg></button>
    <button aria-label="Volume"><svg><use href="#vol"/></svg></button>
    <time>00:10<br>25.05.2026</time>
  </div>
</footer>
</body>
</html>
```
FILE: styles.css
```css
* { box-sizing: border-box; }

body {
  margin: 0;
  height: 100vh;
  display: flex;
  flex-direction: column;
  overflow: hidden;
  background: #222832;
  color: #f2f4f6;
  font: 6px/8px "Open Sans", "Noto Sans", sans-serif;
}

button, input, select {
  margin: 0;
  padding: 0;
  border: 0;
  background: none;
  color: inherit;
  font: inherit;
  white-space: nowrap;
}

svg { display: block; flex: none; width: 9px; height: 9px; }
.sprite { position: absolute; width: 0; height: 0; }

.tri, .caret::after {
  content: "";
  flex: none;
  width: 4px;
  height: 3px;
  background: #cdd2d8;
  clip-path: polygon(0 0, 100% 0, 50% 100%);
}
.caret { display: flex; align-items: center; justify-content: center; width: 9px; }
.caret.dim::after { background: #5b6370; }
.caret.side::after { width: 3px; height: 4px; clip-path: polygon(0 0, 100% 50%, 0 100%); }

/* title bar */
.titlebar { flex: none; display: flex; align-items: center; height: 14px; }
.quick, .account { display: flex; align-items: center; height: 14px; }
.quick { padding-left: 7px; }
.applogo svg { width: 14px; height: 14px; }
.q { display: flex; justify-content: center; width: 12px; }
.quick .caret { width: 7px; }
.sharebtn { display: flex; align-items: center; gap: 2px; margin-left: 2px; color: #a6d3f2; }
.title {
  flex: 1;
  display: flex;
  justify-content: center;
  gap: 6px;
  margin: 0;
  font-size: 6px;
  font-weight: 400;
  line-height: 14px;
  white-space: nowrap;
}
.account .side { width: 7px; }
.search { width: 90px; height: 11px; padding: 0 2px; background: #4a5061; }
.search::placeholder { color: #c9ccd5; opacity: 1; font-style: italic; }
.usr { display: flex; align-items: center; gap: 2px; width: 51px; }
.alert {
  display: flex;
  align-items: center;
  justify-content: center;
  gap: 2px;
  width: 22px;
  height: 13px;
  background: #6557e8;
  color: #fff;
}
.rule { width: 1px; height: 10px; background: #4b5160; }
.q.wide { width: 18px; }
.account .caret { width: 7px; }
.win { display: flex; justify-content: center; width: 23px; }
.win.first { margin-left: 8px; }
.win svg { width: 8px; height: 8px; }

/* ribbon tabs */
.menu { flex: none; display: flex; gap: 1px; height: 12px; padding-left: 2px; color: #bcc1c9; line-height: 12px; }
.menu button { padding: 2px 4px 0; line-height: 8px; }
.menu .on { background: #3e4754; color: #fff; }
.menu .ribbonmode { display: flex; align-items: center; gap: 2px; padding-left: 8px; }
.pill { width: 8px; height: 4px; background: #dfe2e6; }

/* ribbon */
.ribbon { flex: none; display: flex; height: 50px; background: #3e4754; }
.panel { display: flex; flex-direction: column; padding: 2px 2px 0; border-right: 1px solid #313946; }
.draw { width: 113px; }
.modify { width: 125px; padding-left: 4px; }
.annotation { width: 95px; }
.layers { width: 136px; padding-left: 1px; }
.block { width: 122px; padding-left: 1px; }
.properties { width: 129px; padding-left: 0; }
.groups { width: 35px; }
.utilities { width: 49px; }
.clipboard { width: 45px; }
.view { width: 34px; border-right: 0; }
.tools { display: flex; height: 36px; }
.ptitle { display: flex; align-items: center; justify-content: center; gap: 3px; height: 12px; }
.big {
  flex: none;
  display: flex;
  flex-direction: column;
  align-items: center;
  line-height: 8px;
  white-space: normal;
}
.big svg { width: 18px; height: 18px; margin: 1px 0; }
.big .tri { width: 3px; height: 2px; }
.w20 { width: 20px; }
.w24 { width: 24px; }
.w28 { width: 28px; }
.w32 { width: 32px; }
.w36 { width: 36px; }
.col { display: flex; flex-direction: column; }
.grow { flex: 1; min-width: 0; padding-left: 2px; }
.sm { display: flex; align-items: center; gap: 2px; height: 12px; padding: 0 1px; }
.sm .end { margin-left: auto; }
.row { display: flex; }
.row .sm { width: 12px; }
.row .named { width: auto; }
.teal { color: #51cbd2; }
.blue { color: #70b7e9; }
.gold { color: #eac369; }
.red { color: #e96868; }
.sm.active { background: #25738a; outline: 1px solid #69bace; outline-offset: -1px; }
.drop {
  display: flex;
  align-items: center;
  gap: 1px;
  height: 11px;
  margin-bottom: 1px;
  padding: 0 1px;
  background: #4a5463;
}
.drop select { flex: 1; min-width: 0; padding-left: 2px; appearance: none; }
.swatch { width: 8px; height: 8px; background: #fff; }
.stroke { width: 32px; height: 1px; background: #cfd4da; }
.block .col { padding-left: 3px; }

/* drawing tabs and layout tabs */
.doctabs, .status { position: relative; z-index: 0; }
.doctabs { flex: none; display: flex; height: 15px; border-bottom: 2px solid #3a404c; }
.burger { display: flex; align-items: center; justify-content: center; width: 23px; }
.tab { position: relative; display: flex; align-items: center; gap: 5px; padding: 0 7px 0 8px; }
.tab.start { padding: 0 3px 0 6px; }
.tab::before {
  content: "";
  position: absolute;
  inset: 0 2px;
  z-index: -1;
  border-right: 1px solid #343c48;
  transform: skewX(-22deg);
}
.tab.current { font-weight: 700; }
.tab.current::before { background: #3e4754; }
.tab.current svg { width: 6px; height: 6px; }
.doctabs .tab.current { padding-right: 3px; }

/* work area */
.work { flex: 1; display: flex; min-height: 0; }
.recovery {
  flex: none;
  display: flex;
  flex-direction: column;
  width: 95px;
  border-right: 2px solid #303744;
  border-left: 1px solid #303744;
  background: #3b4551;
}
.ptop {
  margin: 0;
  padding-left: 1px;
  background: #2c3340;
  font-size: 6px;
  font-weight: 400;
  line-height: 12px;
  white-space: nowrap;
}
.pane { display: flex; flex-direction: column; min-height: 0; }
.backup { flex: 173; }
.details { flex: 265; }
.preview { flex: 134; }
.phead {
  display: flex;
  align-items: center;
  justify-content: space-between;
  height: 10px;
  padding: 0 3px;
  background: #232935;
  font-weight: 700;
}
.tree { margin: 0; padding: 1px 2px; list-style: none; }
.tree li { display: flex; align-items: center; gap: 2px; height: 9px; white-space: nowrap; }
.expand { width: 7px; height: 7px; }
.grip { display: flex; align-items: center; justify-content: center; height: 5px; background: #2c3340; }
.grip::after {
  content: "";
  width: 9px;
  height: 1px;
  background: repeating-linear-gradient(90deg, #fff 0 1px, transparent 1px 2px);
}

.canvas { position: relative; flex: 1; min-width: 0; background: #252833; overflow: hidden; }
.drawing { width: 100%; height: 100%; }
.viewlabel { position: absolute; left: 2px; top: 3px; }
.winbtns { position: absolute; top: 4px; right: 4px; display: flex; gap: 2px; }
.winbtns svg { width: 8px; height: 8px; }
.cube {
  position: absolute;
  top: 19px;
  right: 9px;
  display: grid;
  grid-template-columns: 1fr auto 1fr;
  grid-template-rows: 1fr auto 1fr;
  width: 66px;
  height: 68px;
  place-items: center;
  color: #c3c5cb;
  font: 700 11px/12px "Liberation Sans", sans-serif;
}
.ring {
  grid-area: 1 / 1 / 4 / 4;
  display: grid;
  place-items: center;
  width: 60px;
  height: 60px;
  border: 7px solid #484a55;
  border-radius: 50%;
}
.n, .s, .e, .w { z-index: 1; }
.n { grid-area: 1 / 2; align-self: start; }
.w { grid-area: 2 / 1; justify-self: start; }
.e { grid-area: 2 / 3; justify-self: end; }
.s { grid-area: 3 / 2; align-self: end; }
.face { width: 26px; height: 26px; background: #c2c4c4; color: #4b4c52; font: 700 6px/8px "Liberation Sans", sans-serif; }
.wcs {
  position: absolute;
  top: 96px;
  right: 30px;
  width: 24px;
  height: 9px;
  border-radius: 3px;
  background: #9fa0aa;
  color: #70717b;
}
.navbar { position: absolute; top: 118px; right: 2px; border-radius: 2px; background: #696b73; }
.navbar svg { width: 16px; height: 106px; }

/* command line */
.command {
  position: absolute;
  left: 240px;
  right: 239px;
  bottom: 1px;
  font: 6px/8px "Liberation Mono", monospace;
}
.command p { width: fit-content; margin: 0 0 2px 32px; padding: 0 1px; background: #50535a; color: #f4f5f5; }
.command .old { color: #c8cacd; }
.cmdrow { display: flex; align-items: center; height: 12px; }
.cmdrow > button { width: 12px; }
.handle {
  width: 5px;
  height: 8px;
  background: linear-gradient(90deg, transparent 2px, #252833 2px 3px, transparent 3px), repeating-linear-gradient(#9a9da5 0 1px, transparent 1px 2px);
}
.cmdrow > button:nth-child(2) svg { width: 7px; height: 7px; margin-left: 3px; }
.entry {
  flex: 1;
  display: flex;
  align-items: center;
  height: 12px;
  padding: 0 2px;
  background: #bdbec2;
  color: #3b3d46;
}
.entry .tri { background: #3b3d46; }
.entry .recent { display: flex; align-items: center; width: 13px; }
.entry input { flex: 1; min-width: 0; outline: 0; }
.opt { margin-right: 2px; background: #a4a5ac; color: #2e3052; }

/* status bar */
.status { flex: none; display: flex; height: 16px; border-top: 1px solid #3a404c; background: #242b37; }
.status .tab { padding: 0 5px; }
.status .current { padding: 0 6px; }
.toggles { display: flex; align-items: center; margin-left: auto; }
.model { margin-right: 3px; }
.t { display: flex; align-items: center; justify-content: center; width: 12px; height: 12px; }
.t.on { background: #4f87bb; outline: 1px solid #242b37; outline-offset: -1px; }
.t.x { width: 14px; }
.ratio { display: flex; align-items: center; justify-content: center; gap: 1px; width: 16px; }

/* task bar */
.taskbar {
  flex: none;
  display: grid;
  grid-template-columns: 1fr auto 1fr;
  align-items: center;
  height: 24px;
  background: #1b1c1e;
}
.weather { display: flex; align-items: center; gap: 2px; padding-left: 8px; text-align: left; }
.weather svg { width: 15px; height: 15px; }
.apps { display: flex; align-items: center; }
.app { position: relative; display: flex; justify-content: center; width: 22px; padding: 4px 0; }
.app svg { width: 13px; height: 13px; }
.run::after {
  content: "";
  position: absolute;
  left: 9px;
  right: 9px;
  bottom: 1px;
  height: 1px;
  background: #a9acb1;
}
.front { background: #343136; border-radius: 2px; }
.front::after { left: 7px; right: 7px; background: #ef8796; }
.badge {
  position: absolute;
  top: 2px;
  right: 1px;
  width: 9px;
  height: 9px;
  border-radius: 50%;
  background: #e8776d;
  color: #311;
}
.find {
  display: flex;
  align-items: center;
  width: 110px;
  height: 16px;
  margin: 0 2px;
  padding: 0 3px 0 5px;
  border-radius: 8px;
  background: #38393b;
}
.find input { flex: 1; min-width: 0; padding-left: 4px; font-size: 7px; outline: 0; }
.find input::placeholder { color: #d7d7d8; opacity: 1; }
.find .art { width: 23px; height: 13px; }
.tray { display: flex; align-items: center; justify-content: flex-end; padding-right: 9px; }
.tray button { display: flex; justify-content: center; width: 14px; }
.tray .mic { align-items: center; width: 16px; height: 20px; margin: 0 2px; border-radius: 2px; background: #ed7769; }
.tray .mic svg { width: 11px; height: 11px; }
.tray time { margin-left: 7px; text-align: right; }
```
